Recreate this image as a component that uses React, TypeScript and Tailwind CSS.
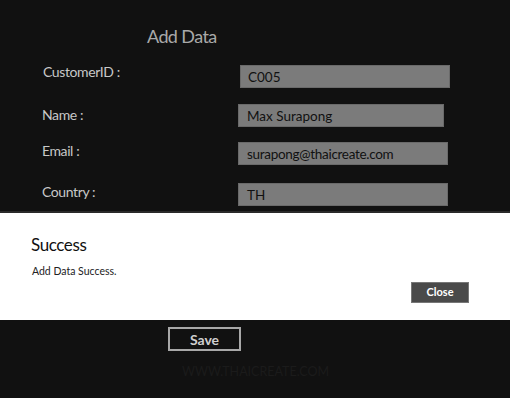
import React from 'react'

const font = { fontFamily: 'Lato, "Noto Sans", sans-serif' }

export default function App() {
  return (
    <div className="relative w-[510px] h-[398px] bg-[#111111] overflow-hidden" style={font}>
      <div className="pt-[23px] pl-[147px] text-[18px] tracking-[-0.6px] text-[#a9a9a9]">Add Data</div>

      <div className="flex flex-col">
        <div className="flex items-center mt-[15px] h-[23px]">
          <div className="w-[196px] pl-[43px] text-[14px] tracking-[-0.4px] text-[#c8c8c8] -mt-[10px]">CustomerID :</div>
          <div className="ml-[44px] w-[210px] h-[23px] bg-[#7b7b7b] border border-[#6a6a6a] text-[13.5px] text-[#111] pl-[7px] leading-[22px]">C005</div>
        </div>
        <div className="flex items-center mt-[16px] h-[23px]">
          <div className="w-[196px] pl-[42px] text-[14px] tracking-[-0.4px] text-[#c8c8c8] -mt-[2px]">Name :</div>
          <div className="ml-[42px] w-[206px] h-[23px] bg-[#7b7b7b] border border-[#6a6a6a] text-[13.5px] text-[#111] pl-[8px] leading-[22px]">Max Surapong</div>
        </div>
        <div className="flex items-center mt-[15px] h-[23px]">
          <div className="w-[196px] pl-[42px] text-[14px] tracking-[-0.4px] text-[#c8c8c8] -mt-[7px]">Email :</div>
          <div className="ml-[42px] w-[210px] h-[23px] bg-[#7b7b7b] border border-[#6a6a6a] text-[13.5px] tracking-[-0.3px] text-[#111] pl-[8px] leading-[22px]">surapong@thaicreate.com</div>
        </div>
        <div className="flex items-center mt-[18px] h-[23px]">
          <div className="w-[196px] pl-[42px] text-[14px] tracking-[-0.4px] text-[#c8c8c8] -mt-[6px]">Country :</div>
          <div className="ml-[42px] w-[210px] h-[23px] bg-[#7b7b7b] border border-[#6a6a6a] text-[13.5px] text-[#111] pl-[8px] leading-[22px]">TH</div>
        </div>
      </div>

      <div className="mt-[121px] ml-[168px] w-[73px] h-[24px] border-2 border-[#a8a8a8] flex items-center justify-center text-[14px] font-bold text-[#cfcfcf]">
        Save
      </div>
      <div className="mt-[12px] ml-[182px] text-[12.5px] text-[#1b1b1b]">WWW.THAICREATE.COM</div>

      {/* message dialog overlay */}
      <div className="absolute left-0 top-[211px] w-full h-[109px] bg-white border-t-2 border-[#2a2a2a]">
        <div className="pt-[21px] pl-[31px] text-[17px] tracking-[-0.4px] leading-[22px] text-[#111]">Success</div>
        <div className="pl-[32px] mt-[9px] text-[10.5px] leading-[12px] text-[#222]">Add Data Success.</div>
        <div className="flex justify-end pr-[41px] mt-[5px]">
          <div className="w-[58px] h-[21px] bg-[#4a4a4a] border border-[#777] flex items-center justify-center text-[11px] font-bold text-white">
            Close
          </div>
        </div>
      </div>
    </div>
  )
}
